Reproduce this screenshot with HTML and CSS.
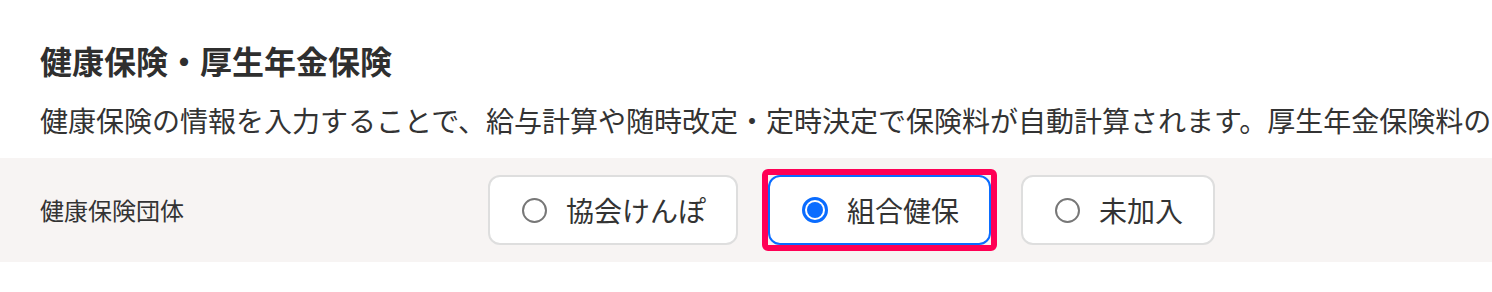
FILE: index.html
```html
<!DOCTYPE html>
<html lang="ja">
<head>
    <meta charset="UTF-8">
    <meta name="viewport" content="width=device-width, initial-scale=1.0">
    <title>健康保険・厚生年金保険</title>
    <link rel="stylesheet" href="styles.css">
</head>
<body>
    <section class="insurance">
        <h2 class="insurance-title">健康保険・厚生年金保険</h2>
        <p class="insurance-desc">健康保険の情報を入力することで、給与計算や随時改定・定時決定で保険料が自動計算されます。厚生年金保険料の</p>

        <div class="field-row">
            <div class="field-label">健康保険団体</div>
            <div class="choices">
                <label class="choice">
                    <span class="radio"></span>
                    <span class="choice-text">協会けんぽ</span>
                </label>
                <label class="choice selected focused">
                    <span class="radio"></span>
                    <span class="choice-text">組合健保</span>
                </label>
                <label class="choice">
                    <span class="radio"></span>
                    <span class="choice-text">未加入</span>
                </label>
            </div>
        </div>
    </section>
</body>
</html>
```

FILE: styles.css
```css
* {
    margin: 0;
    padding: 0;
    box-sizing: border-box;
    font-family: "Noto Sans CJK JP", "Noto Sans", sans-serif;
}

body {
    background: #fff;
    color: #333;
    overflow: hidden;
}

.insurance {
    padding-top: 36px;
}

.insurance-title {
    font-size: 32px;
    font-weight: 700;
    line-height: 48px;
    padding-left: 40px;
    color: #2f2f2f;
}

.insurance-desc {
    font-size: 28px;
    line-height: 42px;
    margin-top: 15px;
    padding-left: 40px;
    white-space: nowrap;
}

.field-row {
    display: flex;
    align-items: center;
    background: #f7f4f3;
    margin-top: 17px;
    padding: 17px 40px;
}

.field-label {
    width: 448px;
    font-size: 24px;
    line-height: 36px;
}

.choices {
    display: flex;
    gap: 30px;
}

.choice {
    position: relative;
    display: flex;
    align-items: center;
    gap: 19px;
    height: 70px;
    padding: 0 30px 0 32px;
    background: #fff;
    border: 2px solid #dedede;
    border-radius: 12px;
    cursor: pointer;
}

.choice-text {
    font-size: 28px;
    line-height: 40px;
}

.radio {
    width: 25px;
    height: 25px;
    border: 2px solid #777;
    border-radius: 50%;
    background: #fff;
    position: relative;
}

.choice.selected {
    border-color: #0a6cff;
}

.choice.selected .radio {
    width: 26px;
    height: 26px;
    border: 3px solid #0a6cff;
}

.choice.selected .radio::before {
    content: "";
    position: absolute;
    inset: 2px;
    border-radius: 50%;
    background: #0a6cff;
}

/* keyboard focus ring */
.choice.focused::after {
    content: "";
    position: absolute;
    inset: -8px;
    border: 6px solid #ff0055;
    border-radius: 6px;
    pointer-events: none;
}
```
